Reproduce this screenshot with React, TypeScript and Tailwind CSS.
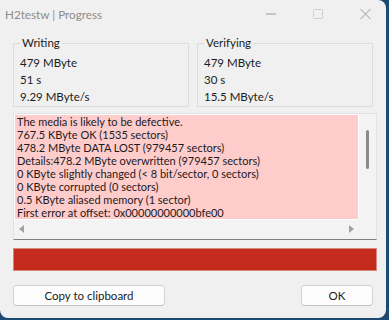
import React from "react";

const font = { fontFamily: 'Lato, "Noto Sans", sans-serif' };

function Group({ title, lines }: { title: string; lines: string[] }) {
  return (
    <fieldset className="w-[178px] border border-[#dcdcdc] px-[6px] pt-[3px] pb-[1px]">
      <legend className="px-[2px] leading-[16px] text-[11.5px] text-[#1b1b1b]">{title}</legend>
      {lines.map((l) => (
        <div key={l} className="leading-[17px] text-[11.5px] text-[#1b1b1b]">
          {l}
        </div>
      ))}
    </fieldset>
  );
}

export default function App() {
  const report = [
    "The media is likely to be defective.",
    "767.5 KByte OK (1535 sectors)",
    "478.2 MByte DATA LOST (979457 sectors)",
    "Details:478.2 MByte overwritten (979457 sectors)",
    "0 KByte slightly changed (< 8 bit/sector, 0 sectors)",
    "0 KByte corrupted (0 sectors)",
    "0.5 KByte aliased memory (1 sector)",
    "First error at offset: 0x00000000000bfe00",
  ];
  return (
    <div className="w-[389px] h-[320px] bg-[#1c4a72]" style={font}>
      <div className="w-[386px] h-[318px] bg-[#f0f0f0] rounded-tr-[8px] rounded-b-[8px] flex flex-col">
        {/* title bar */}
        <div className="h-[30px] flex items-start">
          <div className="pl-[5px] pt-[5px] text-[11.7px] leading-[18px] text-[#8c8c8c]">H2testw | Progress</div>
          <div className="ml-auto flex items-start">
            <svg width="10" height="30" viewBox="0 0 10 30" className="mr-[37px] ml-0">
              <line x1="0" y1="14" x2="10" y2="14" stroke="#9a9a9a" strokeWidth="1" />
            </svg>
            <svg width="10" height="30" viewBox="0 0 10 30" className="mr-[37px]">
              <rect x="0.5" y="9.5" width="9" height="9" rx="1" fill="none" stroke="#cfcfcf" strokeWidth="1" />
            </svg>
            <svg width="11" height="30" viewBox="0 0 11 30" className="mr-[15px]">
              <path d="M0.5 9 L10.5 19 M10.5 9 L0.5 19" stroke="#9a9a9a" strokeWidth="1" />
            </svg>
          </div>
        </div>

        <div className="px-[13px] flex flex-col">
          <div className="mt-[5px] flex gap-[8px]">
            <Group title="Writing" lines={["479 MByte", "51 s", "9.29 MByte/s"]} />
            <Group title="Verifying" lines={["479 MByte", "30 s", "15.5 MByte/s"]} />
          </div>

          {/* report box */}
          <div className="mt-[6px] w-[364px] border border-[#e2e2e2] border-b-[#808080] p-[1px] bg-[#f3f3f3]">
            <div className="grid grid-cols-[343px_18px] grid-rows-[104px_19px]">
              <div className="bg-[#ffcccc] pl-[2px] shadow-[0_0_0_1px_#ffffff]">
                {report.map((l) => (
                  <div key={l} className="text-[11px] leading-[13px] text-[#1b1b1b] whitespace-nowrap">
                    {l}
                  </div>
                ))}
              </div>
              <div className="flex justify-center pt-[15px]">
                <div className="w-[3px] h-[39px] rounded-full bg-[#8a8a8a]" />
              </div>
              <div className="flex items-center justify-between pl-[4px] pr-[4px]">
                <svg width="5" height="8" viewBox="0 0 5 8">
                  <path d="M5 0 L0 4 L5 8 Z" fill="#a2a2a2" />
                </svg>
                <svg width="5" height="8" viewBox="0 0 5 8">
                  <path d="M0 0 L5 4 L0 8 Z" fill="#a2a2a2" />
                </svg>
              </div>
              <div />
            </div>
          </div>

          {/* progress bar */}
          <div className="mt-[8px] w-[364px] h-[23px] bg-[#c42b1c] border border-[#d6887c]" />

          {/* buttons */}
          <div className="mt-[14px] flex justify-between">
            <button className="w-[152px] h-[21px] bg-[#fdfdfd] border border-[#d3d3d3] border-b-[#c2c2c2] rounded-[4px] text-[11.5px] text-[#1b1b1b] leading-[19px]">
              Copy to clipboard
            </button>
            <button className="w-[72px] h-[21px] bg-[#fdfdfd] border border-[#d3d3d3] border-b-[#c2c2c2] rounded-[4px] text-[11.5px] text-[#1b1b1b] leading-[19px]">
              OK
            </button>
          </div>
        </div>
      </div>
    </div>
  );
}
